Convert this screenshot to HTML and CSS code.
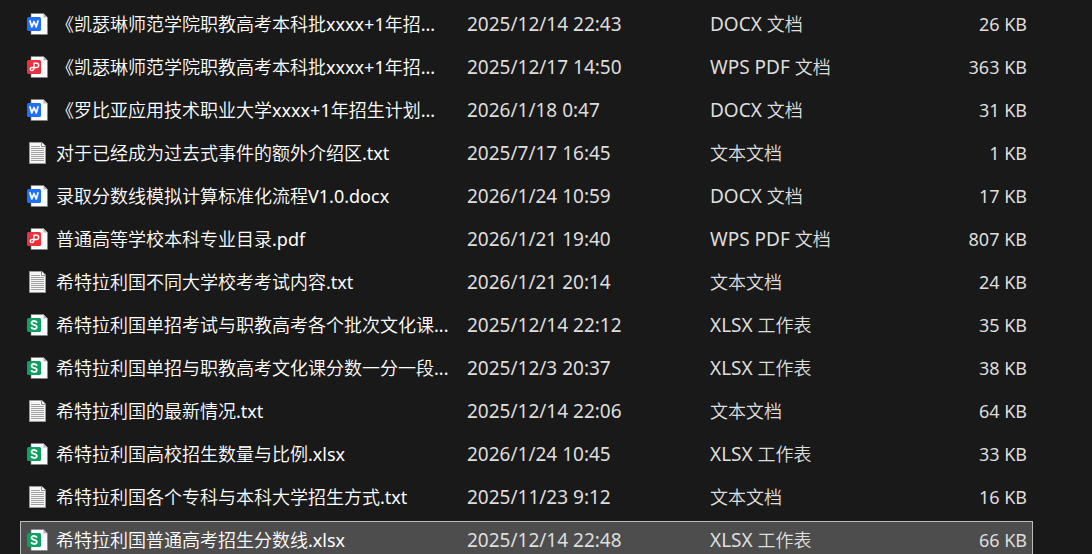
FILE: index.html
```html
<!DOCTYPE html>
<html lang="zh-CN">
<head>
<meta charset="utf-8">
<title>文件列表</title>
<link rel="stylesheet" href="styles.css">
</head>
<body>
<svg class="sprite" aria-hidden="true">
  <symbol id="docx" viewBox="0 0 21 22">
    <path d="M4 .5H16.500L20.500 4.500v17H4z" fill="#fff" stroke="#7c7c7c" stroke-width=".6"/>
    <path d="M16.500 .5V4.500h4z" fill="#b5b5b5"/>
    <rect y="4" width="14" height="14" rx="1.500" fill="#1e6fff"/>
    <path d="M2.800 7.300L4.800 14 7 8.500 9.200 14 11.200 7.300" fill="none" stroke="#fff" stroke-width="1.700" stroke-linejoin="round"/>
  </symbol>
  <symbol id="pdf" viewBox="0 0 21 22">
    <path d="M4 .5H16.500L20.500 4.500v17H4z" fill="#fff" stroke="#7c7c7c" stroke-width=".6"/>
    <path d="M16.500 .5V4.500h4z" fill="#b5b5b5"/>
    <rect y="4" width="14" height="14" rx="1.500" fill="#ee2f3d"/>
    <path d="M7 11.500V7.300h2.600a2.100 2.100 0 0 1 0 4.200H4.800a1.500 1.500 0 0 0 0 3.100C6.400 14.600 7 13.500 7 11.500z" fill="none" stroke="#fff" stroke-width="1.400"/>
  </symbol>
  <symbol id="xlsx" viewBox="0 0 21 22">
    <path d="M4 .5H16.500L20.500 4.500v17H4z" fill="#fff" stroke="#7c7c7c" stroke-width=".6"/>
    <path d="M16.500 .5V4.500h4z" fill="#b5b5b5"/>
    <rect y="4" width="14" height="14" rx="1.500" fill="#0e9f62"/>
    <path d="M9.900 8.800C9.200 6.500 4.500 6.300 4.500 8.800c0 2.800 5.300 1.500 5.300 4.300 0 2.400-4.900 2.300-5.700 0" fill="none" stroke="#fff" stroke-width="1.800"/>
  </symbol>
  <symbol id="txt" viewBox="0 0 21 22">
    <path d="M2.500.5H15L18.500 4v17.500h-16z" fill="#f6f6f6" stroke="#9a9a9a"/>
    <path d="M14.500.5V4.500h4" fill="#fff" stroke="#8a8a8a"/>
    <path d="M4 4.500h9M4 6.500h13M4 8.500h13M4 10.500h13M4 12.500h13M4 14.500h13M4 16.500h13M4 18.500h13" stroke="#a2a2a2"/>
  </symbol>
</svg>
<main>
<table class="files">
  <colgroup><col class="col-name"><col class="col-date"><col class="col-type"><col></colgroup>
  <tbody>
    <tr><td><div class="name"><svg class="icon"><use href="#docx"/></svg><span>《凯瑟琳师范学院职教高考本科批<span class="latin">xxxx+1</span>年招<span class="latin">...</span></span></div></td><td class="latin">2025/12/14 22:43</td><td><span class="latin">DOCX </span>文档</td><td class="size">26 KB</td></tr>
    <tr><td><div class="name"><svg class="icon"><use href="#pdf"/></svg><span>《凯瑟琳师范学院职教高考本科批<span class="latin">xxxx+1</span>年招<span class="latin">...</span></span></div></td><td class="latin">2025/12/17 14:50</td><td><span class="latin">WPS PDF </span>文档</td><td class="size">363 KB</td></tr>
    <tr><td><div class="name"><svg class="icon"><use href="#docx"/></svg><span>《罗比亚应用技术职业大学<span class="latin">xxxx+1</span>年招生计划<span class="latin">...</span></span></div></td><td class="latin">2026/1/18 0:47</td><td><span class="latin">DOCX </span>文档</td><td class="size">31 KB</td></tr>
    <tr><td><div class="name"><svg class="icon"><use href="#txt"/></svg><span>对于已经成为过去式事件的额外介绍区<span class="latin">.txt</span></span></div></td><td class="latin">2025/7/17 16:45</td><td>文本文档</td><td class="size">1 KB</td></tr>
    <tr><td><div class="name"><svg class="icon"><use href="#docx"/></svg><span>录取分数线模拟计算标准化流程<span class="latin">V1.0.docx</span></span></div></td><td class="latin">2026/1/24 10:59</td><td><span class="latin">DOCX </span>文档</td><td class="size">17 KB</td></tr>
    <tr><td><div class="name"><svg class="icon"><use href="#pdf"/></svg><span>普通高等学校本科专业目录<span class="latin">.pdf</span></span></div></td><td class="latin">2026/1/21 19:40</td><td><span class="latin">WPS PDF </span>文档</td><td class="size">807 KB</td></tr>
    <tr><td><div class="name"><svg class="icon"><use href="#txt"/></svg><span>希特拉利国不同大学校考考试内容<span class="latin">.txt</span></span></div></td><td class="latin">2026/1/21 20:14</td><td>文本文档</td><td class="size">24 KB</td></tr>
    <tr><td><div class="name"><svg class="icon"><use href="#xlsx"/></svg><span>希特拉利国单招考试与职教高考各个批次文化课<span class="latin">...</span></span></div></td><td class="latin">2025/12/14 22:12</td><td><span class="latin">XLSX </span>工作表</td><td class="size">35 KB</td></tr>
    <tr><td><div class="name"><svg class="icon"><use href="#xlsx"/></svg><span>希特拉利国单招与职教高考文化课分数一分一段<span class="latin">...</span></span></div></td><td class="latin">2025/12/3 20:37</td><td><span class="latin">XLSX </span>工作表</td><td class="size">38 KB</td></tr>
    <tr><td><div class="name"><svg class="icon"><use href="#txt"/></svg><span>希特拉利国的最新情况<span class="latin">.txt</span></span></div></td><td class="latin">2025/12/14 22:06</td><td>文本文档</td><td class="size">64 KB</td></tr>
    <tr><td><div class="name"><svg class="icon"><use href="#xlsx"/></svg><span>希特拉利国高校招生数量与比例<span class="latin">.xlsx</span></span></div></td><td class="latin">2026/1/24 10:45</td><td><span class="latin">XLSX </span>工作表</td><td class="size">33 KB</td></tr>
    <tr><td><div class="name"><svg class="icon"><use href="#txt"/></svg><span>希特拉利国各个专科与本科大学招生方式<span class="latin">.txt</span></span></div></td><td class="latin">2025/11/23 9:12</td><td>文本文档</td><td class="size">16 KB</td></tr>
    <tr class="selected" aria-selected="true"><td><div class="name"><svg class="icon"><use href="#xlsx"/></svg><span>希特拉利国普通高考招生分数线<span class="latin">.xlsx</span></span></div></td><td class="latin">2025/12/14 22:48</td><td><span class="latin">XLSX </span>工作表</td><td class="size">66 KB</td></tr>
  </tbody>
</table>
</main>
</body>
</html>
```

FILE: styles.css
```css
body {
  margin: 0;
  overflow: hidden;
  background: #191919;
  color: #dedede;
  font-family: "Noto Sans", "Noto Sans CJK SC", sans-serif;
  font-size: 18px;
  font-weight: 350;
  line-height: 24px;
}

.sprite {
  display: none;
}

main {
  padding: 2px 59px 0 20px;
}

.files {
  width: 100%;
  table-layout: fixed;
  border-collapse: separate;
  border-spacing: 0 3px;
}

.col-name {
  width: 447px;
}

.col-date {
  width: 243px;
}

.col-type {
  width: 200px;
}

.files td {
  box-sizing: border-box;
  height: 40px;
  padding: 0 0 2px;
  border: 1px solid transparent;
  border-width: 1px 0;
  white-space: nowrap;
  vertical-align: middle;
}

.files td:first-child {
  padding-left: 6px;
  border-left-width: 1px;
}

.files td:last-child {
  padding-right: 5px;
  border-right-width: 1px;
}

.name {
  display: flex;
  align-items: center;
  gap: 8px;
  color: #fff;
}

.icon {
  flex: none;
  width: 21px;
  height: 22px;
}

.latin {
  font-size: 19px;
  font-weight: 400;
}

.name .latin {
  font-size: 18px;
}

.size {
  font-weight: 400;
  text-align: right;
}

.files .selected td {
  background: #4d4d4d;
  border-color: #bcbcbc;
}
```
